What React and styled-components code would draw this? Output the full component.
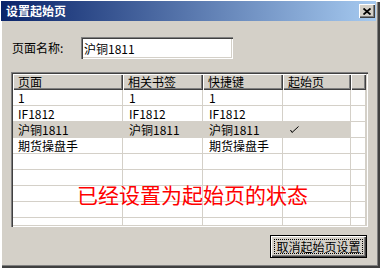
import React from "react";
import styled, { createGlobalStyle } from "styled-components";

const GlobalStyle = createGlobalStyle`
  body {
    margin: 0;
    background: #d4d0c8;
    font-family: "Noto Sans CJK SC", "Liberation Sans", sans-serif;
    font-size: 12px;
    color: #000;
  }
`;

const FACE = "#d4d0c8";

const Window = styled.div`
  width: 380px;
  height: 268px;
  box-sizing: border-box;
  padding: 1px 4px 3px 1px;
  background: ${FACE};
  display: flex;
  flex-direction: column;
  box-shadow: inset 2px 2px #fff, inset -1px -1px #404040,
    inset -2px -2px #404040, inset -3px -3px #808080;
`;

const TitleBar = styled.div`
  height: 20px;
  flex: none;
  display: flex;
  align-items: center;
  justify-content: space-between;
  padding: 0 1px 0 5px;
  background: linear-gradient(to right, #0a246a, #a6caf0);
`;

const Title = styled.span`
  color: #fff;
  font-weight: bold;
  font-size: 12px;
  line-height: 14px;
`;

const CloseButton = styled.div`
  width: 16px;
  height: 14px;
  box-sizing: border-box;
  background: ${FACE};
  display: flex;
  align-items: center;
  justify-content: center;
  box-shadow: inset 1px 1px #fff, inset -1px -1px #404040,
    inset -2px -2px #808080;
`;

const Body = styled.div`
  flex: 1;
  display: flex;
  flex-direction: column;
  padding: 16px 8px 0 10px;
`;

const NameRow = styled.div`
  display: flex;
  align-items: center;
  height: 22px;
  margin-left: 1px;
`;

const Label = styled.span`
  width: 69px;
  line-height: 14px;
`;

const TextInput = styled.div`
  width: 152px;
  height: 22px;
  box-sizing: border-box;
  padding: 0 3px;
  background: #fff;
  display: flex;
  align-items: center;
  box-shadow: inset 1px 1px #808080, inset 2px 2px #404040,
    inset -1px -1px #fff, inset -2px -2px ${FACE};
`;

const ListView = styled.div`
  position: relative;
  margin-top: 13px;
  height: 155px;
  box-sizing: border-box;
  padding: 2px;
  background: #fff;
  overflow: hidden;
  box-shadow: inset 1px 1px #808080, inset 2px 2px #404040,
    inset -1px -1px #fff, inset -2px -2px ${FACE};
`;

const Grid = styled.div`
  height: 100%;
  overflow: hidden;
`;

const COLUMNS = "110px 80px 80px 68px 1fr";

const HeaderRow = styled.div`
  display: grid;
  grid-template-columns: ${COLUMNS};
  height: 16px;
`;

const HeaderCell = styled.div`
  box-sizing: border-box;
  padding-left: 5px;
  background: ${FACE};
  line-height: 15px;
  box-shadow: inset 1px 1px #fff, inset -1px -1px #404040,
    inset -2px -2px #808080;
`;

const Row = styled.div`
  display: grid;
  grid-template-columns: ${COLUMNS};
  height: 16px;
`;

const Cell = styled.div`
  box-sizing: border-box;
  padding-left: ${(p) => (p.$first ? 5 : 6)}px;
  border-right: 1px solid ${FACE};
  border-bottom: 1px solid ${FACE};
  background: ${(p) => (p.$selected ? FACE : "#fff")};
  line-height: 15px;
  white-space: nowrap;
  display: flex;
  align-items: center;
`;

const Check = styled.svg`
  margin-left: 1px;
`;

const Note = styled.div`
  position: absolute;
  left: 66px;
  top: 112px;
  font-size: 21px;
  line-height: 21px;
  color: #ff0000;
  white-space: nowrap;
  pointer-events: none;
`;

const ButtonRow = styled.div`
  display: flex;
  justify-content: flex-end;
  margin-top: 8px;
  padding-right: 1px;
`;

const Button = styled.div`
  position: relative;
  width: 97px;
  height: 23px;
  box-sizing: border-box;
  border: 1px solid #000;
  background: ${FACE};
  display: flex;
  align-items: center;
  justify-content: center;
  line-height: 14px;
  box-shadow: inset 1px 1px #fff, inset -1px -1px #404040,
    inset -2px -2px #808080;

  &::after {
    content: "";
    position: absolute;
    inset: 3px;
    border: 1px dotted #000;
  }
`;

const headers = ["页面", "相关书签", "快捷键", "起始页", ""];

const rows = [
  ["1", "1", "1", false],
  ["IF1812", "IF1812", "IF1812", false],
  ["沪铜1811", "沪铜1811", "沪铜1811", true],
  ["期货操盘手", "", "期货操盘手", false],
  ["", "", "", false],
  ["", "", "", false],
  ["", "", "", false],
  ["", "", "", false],
  ["", "", "", false],
];

const App = () => {
  return (
    <>
      <GlobalStyle />
      <Window>
        <TitleBar>
          <Title>设置起始页</Title>
          <CloseButton>
            <svg width="8" height="7" viewBox="0 0 8 7">
              <path d="M0.5 0.5 L7.5 6.5 M7.5 0.5 L0.5 6.5" stroke="#000" strokeWidth="1.8" />
            </svg>
          </CloseButton>
        </TitleBar>
        <Body>
          <NameRow>
            <Label>页面名称:</Label>
            <TextInput>沪铜1811</TextInput>
          </NameRow>
          <ListView>
            <Grid>
              <HeaderRow>
                {headers.map((h, i) => (
                  <HeaderCell key={i}>{h}</HeaderCell>
                ))}
              </HeaderRow>
              {rows.map((r, i) => (
                <Row key={i}>
                  <Cell $first $selected={r[3]}>{r[0]}</Cell>
                  <Cell $selected={r[3]}>{r[1]}</Cell>
                  <Cell $selected={r[3]}>{r[2]}</Cell>
                  <Cell $selected={r[3]}>
                    {r[3] && (
                      <Check width="9" height="7" viewBox="0 0 9 7">
                        <path d="M0.5 4 L2 6.5 L8.5 0.5" stroke="#000" strokeWidth="1" fill="none" />
                      </Check>
                    )}
                  </Cell>
                  <Cell />
                </Row>
              ))}
            </Grid>
            <Note>已经设置为起始页的状态</Note>
          </ListView>
          <ButtonRow>
            <Button>取消起始页设置</Button>
          </ButtonRow>
        </Body>
      </Window>
    </>
  );
};

export default App;
